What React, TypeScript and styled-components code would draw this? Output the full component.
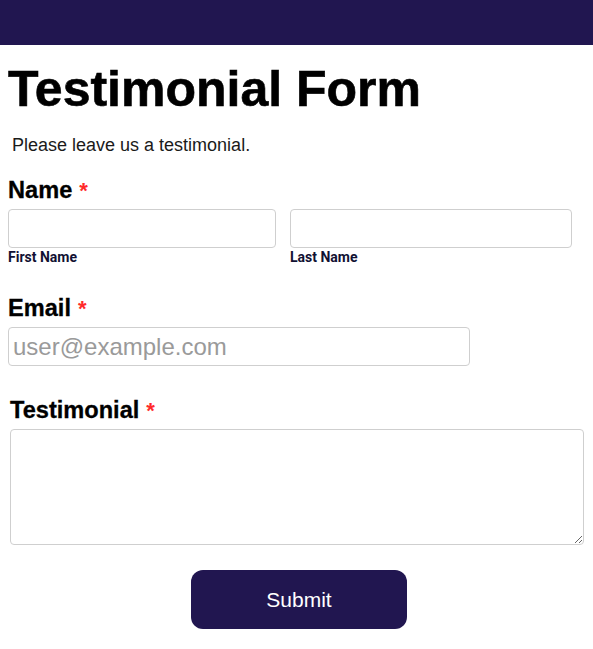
import React from 'react';
import styled, { createGlobalStyle } from 'styled-components';

const GlobalStyle = createGlobalStyle`
    body {
        margin: 0;
        background: #ffffff;
        font-family: 'Liberation Sans', Arial, sans-serif;
        color: #000000;
    }
`;

const TopBar = styled.header`
    height: 45px;
    background: #211650;
`;

const Page = styled.main`
    display: flex;
    flex-direction: column;
    padding: 0 8px;
`;

const Title = styled.h1`
    margin: 16px 0 0;
    font-size: 50px;
    line-height: 56px;
    font-weight: 700;
    -webkit-text-stroke: 0.6px #000000;
`;

const Intro = styled.p`
    margin: 18px 0 0 4px;
    font-size: 18px;
    line-height: 21px;
    color: #1a1a1a;
`;

const Field = styled.section<{ $top: number; $shift?: number }>`
    display: flex;
    flex-direction: column;
    margin-top: ${(p) => p.$top}px;
    padding-left: ${(p) => p.$shift || 0}px;
`;

const Label = styled.label`
    display: flex;
    align-items: baseline;
    gap: 7px;
    font-size: 23.6px;
    line-height: 26px;
    font-weight: 700;
    margin-bottom: 5px;
    -webkit-text-stroke: 0.3px #000000;
`;

const Star = styled.span`
    color: #ff2a2a;
    font-size: 22px;
    -webkit-text-stroke: 0;
`;

const NameRow = styled.div`
    display: flex;
    gap: 14px;
`;

const NamePart = styled.div<{ $width: number }>`
    display: flex;
    flex-direction: column;
    width: ${(p) => p.$width}px;
`;

const Input = styled.input<{ $width?: number }>`
    box-sizing: border-box;
    width: ${(p) => (p.$width ? `${p.$width}px` : '100%')};
    height: 39px;
    margin: 0;
    padding: 0 4px;
    border: 1px solid #cfcfcf;
    border-radius: 4px;
    font-family: 'Liberation Sans', Arial, sans-serif;
    font-size: 24px;
    outline: none;
    &::placeholder {
        color: #9a9a9a;
    }
`;

const SubLabel = styled.span`
    font-family: 'Roboto', 'Liberation Sans', sans-serif;
    font-size: 14px;
    line-height: 14px;
    font-weight: 700;
    color: #111133;
    margin-top: 2px;
`;

const TextArea = styled.textarea`
    box-sizing: border-box;
    width: 574px;
    height: 116px;
    margin: 0;
    padding: 4px;
    border: 1px solid #cfcfcf;
    border-radius: 4px;
    font-family: 'Liberation Sans', Arial, sans-serif;
    font-size: 16px;
    outline: none;
    display: block;
`;

const Actions = styled.div`
    display: flex;
    justify-content: center;
    padding-left: 5px;
    margin-top: 25px;
`;

const SubmitButton = styled.button`
    width: 216px;
    height: 59px;
    border: none;
    border-radius: 12px;
    background: #211650;
    color: #ffffff;
    font-family: 'Liberation Sans', Arial, sans-serif;
    font-size: 21px;
    cursor: pointer;
`;

const App: React.FC = () => {
    return (
        <>
            <GlobalStyle />
            <TopBar />
            <Page>
                <Title>Testimonial Form</Title>
                <Intro>Please leave us a testimonial.</Intro>

                <Field $top={21}>
                    <Label>
                        Name <Star>*</Star>
                    </Label>
                    <NameRow>
                        <NamePart $width={268}>
                            <Input />
                            <SubLabel>First Name</SubLabel>
                        </NamePart>
                        <NamePart $width={282}>
                            <Input />
                            <SubLabel>Last Name</SubLabel>
                        </NamePart>
                    </NameRow>
                </Field>

                <Field $top={31}>
                    <Label>
                        Email <Star>*</Star>
                    </Label>
                    <Input $width={462} placeholder="user@example.com" />
                </Field>

                <Field $top={31} $shift={2}>
                    <Label>
                        Testimonial <Star>*</Star>
                    </Label>
                    <TextArea />
                </Field>

                <Actions>
                    <SubmitButton type="button">Submit</SubmitButton>
                </Actions>
            </Page>
        </>
    );
};

export default App;
